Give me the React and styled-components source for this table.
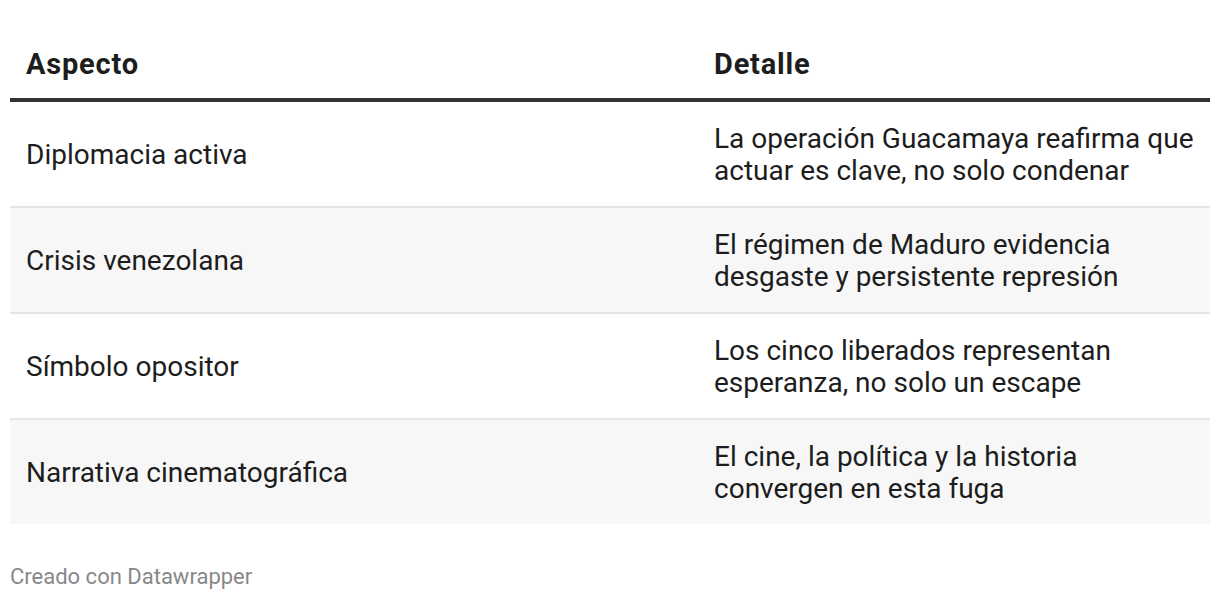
import React from 'react';
import styled, { createGlobalStyle } from 'styled-components';

const rows = [
  ['Diplomacia activa', 'La operación Guacamaya reafirma que actuar es clave, no solo condenar'],
  ['Crisis venezolana', 'El régimen de Maduro evidencia desgaste y persistente represión'],
  ['Símbolo opositor', 'Los cinco liberados representan esperanza, no solo un escape'],
  ['Narrativa cinematográfica', 'El cine, la política y la historia convergen en esta fuga'],
];

const GlobalStyle = createGlobalStyle`
  body {
    margin: 0;
    background: #ffffff;
    font-family: Roboto, "Liberation Sans", sans-serif;
    color: #1d1d1d;
  }
`;

const Page = styled.div`
  padding: 30px 10px 0 10px;
`;

const Table = styled.div`
  display: flex;
  flex-direction: column;
`;

const HeadRow = styled.div`
  display: grid;
  grid-template-columns: 688px 1fr;
  align-items: end;
  border-bottom: 4px solid #333333;
  height: 68px;
`;

const HeadCell = styled.div`
  padding: 0 12px 18px 16px;
  font-weight: 700;
  font-size: 29px;
  letter-spacing: 0.8px;
  line-height: 32px;
`;

const Row = styled.div`
  display: grid;
  grid-template-columns: 688px 1fr;
  align-items: center;
  background: ${({ $striped }) => ($striped ? '#f7f7f7' : '#ffffff')};
  border-bottom: ${({ $last }) => ($last ? 'none' : '2px solid #e5e5e5')};
  min-height: 104px;
`;

const Cell = styled.div`
  padding: 21px 10px 19px 16px;
  font-size: 28px;
  line-height: 32px;
`;

const Footer = styled.div`
  margin-top: 40px;
  font-size: 22px;
  color: #888888;
`;

export default function App() {
  return (
    <>
      <GlobalStyle />
      <Page>
        <Table>
          <HeadRow>
            <HeadCell>Aspecto</HeadCell>
            <HeadCell>Detalle</HeadCell>
          </HeadRow>
          {rows.map(([a, d], i) => (
            <Row key={a} $striped={i % 2 === 1} $last={i === rows.length - 1}>
              <Cell>{a}</Cell>
              <Cell>{d}</Cell>
            </Row>
          ))}
        </Table>
        <Footer>Creado con Datawrapper</Footer>
      </Page>
    </>
  );
}
